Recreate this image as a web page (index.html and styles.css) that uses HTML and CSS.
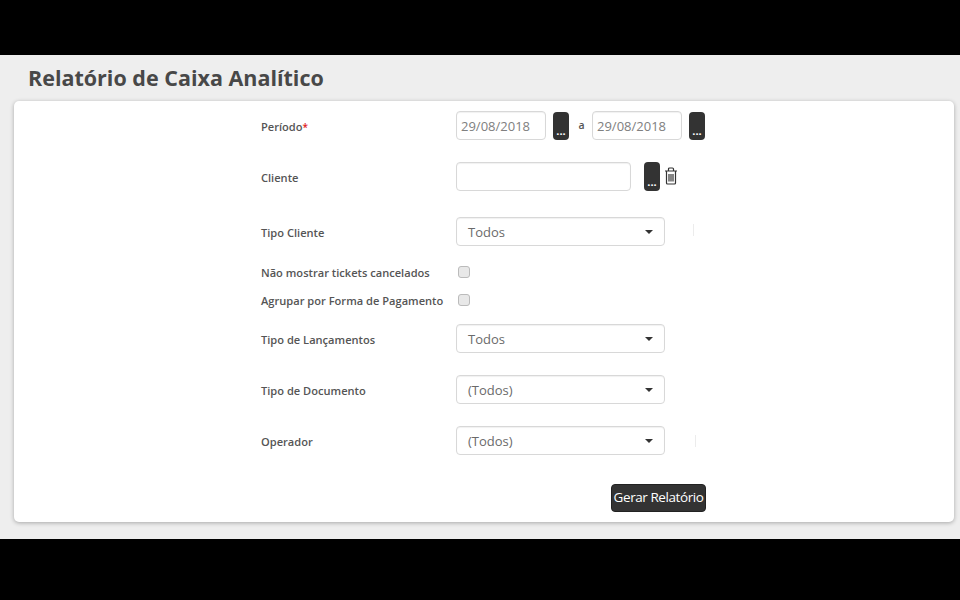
FILE: index.html
```html
<!DOCTYPE html>
<html lang="pt-BR">
<head>
<meta charset="utf-8">
<title>Relatório de Caixa Analítico</title>
<link rel="stylesheet" href="styles.css">
</head>
<body>
<div class="band"></div>
<main class="page">
  <h1 class="title">Relatório de Caixa Analítico</h1>
  <section class="card">
    <form class="form">
      <div class="row row-period">
        <span class="label">Período<span class="req">*</span></span>
        <div class="controls">
          <div class="input date">29/08/2018</div>
          <span class="dots dots-a">...</span>
          <span class="sep">a</span>
          <div class="input date">29/08/2018</div>
          <span class="dots dots-a">...</span>
        </div>
      </div>
      <div class="row row-client">
        <span class="label">Cliente</span>
        <div class="controls">
          <div class="input client"></div>
          <span class="dots dots-b">...</span>
          <svg class="trash" viewBox="0 0 14 18" width="14" height="18" fill="none" stroke="#333" stroke-width="1.200">
            <path d="M1 4h12M2.500 4v12a1 1 0 0 0 1 1h7a1 1 0 0 0 1-1V4M4.500 4V2a1 1 0 0 1 1-1h3a1 1 0 0 1 1 1v2M5 7v7.500M7 7v7.500M9 7v7.500"/>
          </svg>
        </div>
      </div>
      <div class="row row-type">
        <span class="label">Tipo Cliente</span>
        <div class="controls">
          <div class="input select"><span>Todos</span><i class="caret"></i></div>
          <i class="tick"></i>
        </div>
      </div>
      <div class="row row-check first-check">
        <span class="label label-check">Não mostrar tickets cancelados</span>
        <span class="checkbox"></span>
      </div>
      <div class="row row-check">
        <span class="label label-check">Agrupar por Forma de Pagamento</span>
        <span class="checkbox"></span>
      </div>
      <div class="row row-launch">
        <span class="label">Tipo de Lançamentos</span>
        <div class="controls">
          <div class="input select"><span>Todos</span><i class="caret"></i></div>
        </div>
      </div>
      <div class="row row-next">
        <span class="label">Tipo de Documento</span>
        <div class="controls">
          <div class="input select"><span>(Todos)</span><i class="caret"></i></div>
        </div>
      </div>
      <div class="row row-next">
        <span class="label">Operador</span>
        <div class="controls">
          <div class="input select"><span>(Todos)</span><i class="caret"></i></div>
          <i class="tick tick-low"></i>
        </div>
      </div>
      <div class="actions">
        <button type="button" class="submit">Gerar Relatório</button>
      </div>
    </form>
  </section>
</main>
<div class="band"></div>
</body>
</html>
```

FILE: styles.css
```css
* { box-sizing: border-box; }
html, body { margin: 0; height: 600px; overflow: hidden; background: #000; }
body { font-family: "Open Sans", sans-serif; color: #555; display: flex; flex-direction: column; }
.band { height: 55px; background: #000; flex: none; }
.band:last-child { height: 61px; }
.page { height: 484px; background: #eee; padding: 0 6px 0 14px; flex: none; }
.title { margin: 0; height: 46px; padding: 7px 0 0 14px; font-size: 21.500px; line-height: 32px; font-weight: 700; color: #484848; }
.card { height: 421px; background: #fff; border-radius: 5px; box-shadow: 0 1px 4px rgba(0,0,0,.3); padding: 10px 0 0 247px; }
.form { width: 460px; }
.row { display: flex; align-items: center; height: 29px; }
.label { width: 195px; flex: none; font-size: 11.100px; font-weight: 600; color: #555; position: relative; top: 1px; }
.label-check { top: 0; }
.req { color: #e02020; font-size: 10px; }
.controls { display: flex; align-items: center; position: relative; }
.row-client { margin-top: 22px; }
.row-type { margin-top: 26px; }
.row-check { height: 28px; }
.first-check { margin-top: 12px; }
.row-launch { margin-top: 10px; }
.row-next { margin-top: 22px; }
.input { height: 29px; border: 1px solid #d8d8d8; border-radius: 4px; background: #fff; font-size: 13px; color: #808080; box-shadow: inset 0 1px 1px rgba(0,0,0,.06); display: flex; align-items: center; }
.date { width: 90px; padding-left: 4px; }
.client { width: 175px; }
.select { width: 208.500px; padding: 0 11px; justify-content: space-between; color: #6a6a6a; }
.caret { width: 0; height: 0; border-left: 4px solid transparent; border-right: 4px solid transparent; border-top: 4px solid #333; margin-right: 0; }
.dots { background: #333; color: #fff; border-radius: 4px; display: flex; align-items: flex-end; justify-content: center; font-size: 11px; font-weight: 700; line-height: 16px; height: 28px; width: 16px; padding-bottom: 1px; }
.dots-a { margin-left: 7px; }
.dots-b { margin-left: 13px; height: 29px; }
.sep { width: 23px; text-align: center; font-size: 10.500px; font-weight: 600; position: relative; top: -1px; left: 1px; }
.trash { margin-left: 4px; margin-top: -2px; }
.tick { width: 1px; height: 12px; background: #ececec; margin-left: 28px; margin-top: -4px; }
.tick-low { margin-left: 30px; margin-top: 0; }
.checkbox { width: 12px; height: 12px; margin-left: 2px; border: 1px solid #bbb; border-radius: 3px; background: #e8e8e8; }
.actions { margin-top: 29px; display: flex; justify-content: flex-end; width: 445px; }
.submit { width: 95px; height: 28px; background: #333; color: #fff; border: 1px solid #222; border-radius: 4px; font: 400 13.500px/1 "Open Sans", sans-serif; letter-spacing: -.43px; padding: 0; white-space: nowrap; }
```
